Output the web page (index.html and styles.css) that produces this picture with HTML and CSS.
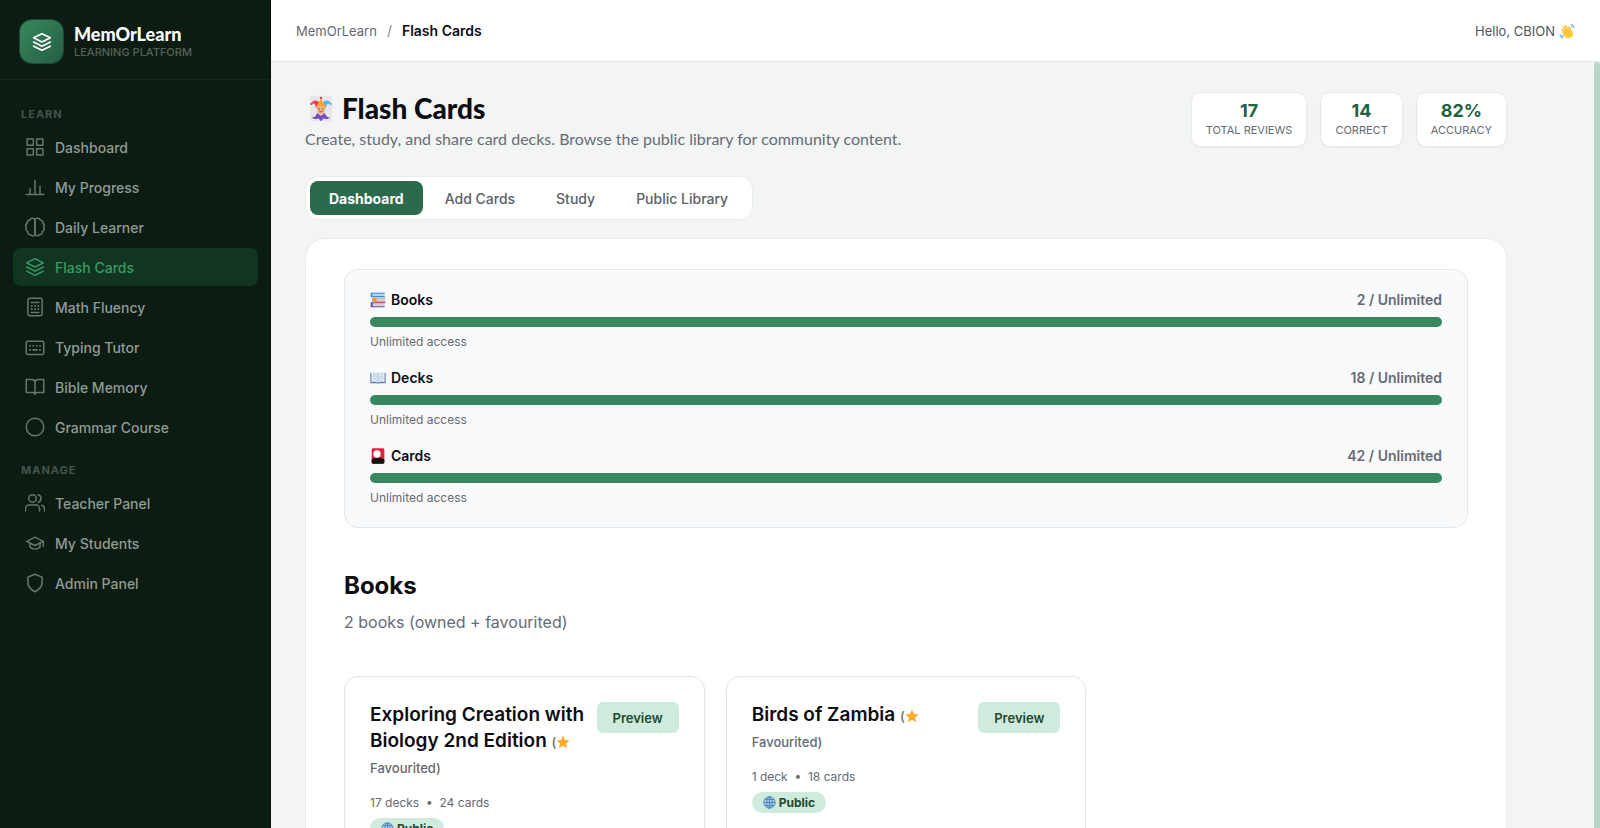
FILE: index.html
```html
<!DOCTYPE html>
<html lang="en">
<head>
<meta charset="utf-8">
<title>Flash Cards - MemOrLearn</title>
<link rel="stylesheet" href="styles.css">
</head>
<body>
<svg class="sprite" aria-hidden="true">
  <symbol id="layers" viewBox="0 0 24 24"><path d="M12 2 2 7l10 5 10-5z"/><path d="m2 12 10 5 10-5"/><path d="m2 17 10 5 10-5"/></symbol>
  <symbol id="star" viewBox="0 0 24 24"><path fill="#fda92b" stroke="none" d="M12 1l3.2 7.6 8.3.7-6.3 5.4 1.9 8.1-7.1-4.3-7.1 4.3 1.9-8.1L.5 9.3l8.3-.7z"/></symbol>
  <symbol id="globe" viewBox="0 0 24 24"><circle cx="12" cy="12" r="10.5" fill="#a9cdea"/><g fill="none" stroke="#4a80b8" stroke-width="1.6"><circle cx="12" cy="12" r="10.5"/><ellipse cx="12" cy="12" rx="5" ry="10.5"/><path d="M12 1.500v21M1.500 12h21M3.500 6.500h17M3.500 17.500h17"/></g></symbol>
</svg>
<div class="app">
  <aside class="sidebar">
    <div class="brand">
      <div class="brand-mark"><svg class="icon"><use href="#layers"/></svg></div>
      <div class="brand-text">
        <div class="brand-name">MemOrLearn</div>
        <div class="brand-tag">LEARNING PLATFORM</div>
      </div>
    </div>
    <nav class="nav">
      <div class="nav-label">LEARN</div>
      <a class="nav-item" href="#"><svg class="icon" viewBox="0 0 24 24"><rect x="2.500" y="2.500" width="7.500" height="7.500"/><rect x="14" y="2.500" width="7.500" height="7.500"/><rect x="2.500" y="14" width="7.500" height="7.500"/><rect x="14" y="14" width="7.500" height="7.500"/></svg>Dashboard</a>
      <a class="nav-item" href="#"><svg class="icon" viewBox="0 0 24 24"><path d="M1.500 21h21M6 20v-6M12 20V4M18 20v-9"/></svg>My Progress</a>
      <a class="nav-item" href="#"><svg class="icon" viewBox="0 0 24 24"><path d="M9.500 1.500A2.500 2.500 0 0 1 12 4v16a2.500 2.500 0 0 1-4.800 1.200A3.300 3.300 0 0 1 3.200 17.500 4 4 0 0 1 1.500 12.500a3.500 3.500 0 0 1 1-5A3.500 3.500 0 0 1 6 3.500a2.800 2.800 0 0 1 3.500-2z"/><path d="M14.500 1.500A2.500 2.500 0 0 0 12 4v16a2.500 2.500 0 0 0 4.800 1.200 3.300 3.300 0 0 0 4-3.700 4 4 0 0 0 1.700-5 3.500 3.500 0 0 0-1-5A3.500 3.500 0 0 0 18 3.500a2.800 2.800 0 0 0-3.500-2z"/></svg>Daily Learner</a>
      <a class="nav-item active" href="#" aria-current="page"><svg class="icon"><use href="#layers"/></svg>Flash Cards</a>
      <a class="nav-item" href="#"><svg class="icon" viewBox="0 0 24 24"><rect x="3.500" y="1.500" width="17" height="21" rx="2"/><path d="M7.500 6.500h9"/><path class="dots" d="M7 11h2M11 11h2M15 11h2M7 14.500h2M11 14.500h2M15 14.500h2"/><path d="M7.500 18.500h9"/></svg>Math Fluency</a>
      <a class="nav-item" href="#"><svg class="icon" viewBox="0 0 24 24"><rect x="1.500" y="5" width="21" height="16" rx="2"/><path class="dots" d="M5 10.500h2M9 10.500h2M13 10.500h2M17 10.500h2M5 15.500h2M9 15.500h6M17 15.500h2"/></svg>Typing Tutor</a>
      <a class="nav-item" href="#"><svg class="icon" viewBox="0 0 24 24"><path d="M1.500 3H8a4 4 0 0 1 4 4v14a3 3 0 0 0-3-2.500H1.500zM22.500 3H16a4 4 0 0 0-4 4v14a3 3 0 0 1 3-2.500h7.500z"/></svg>Bible Memory</a>
      <a class="nav-item" href="#"><svg class="icon" viewBox="0 0 24 24"><circle cx="12" cy="12" r="10.500"/></svg>Grammar Course</a>
      <div class="nav-label">MANAGE</div>
      <a class="nav-item" href="#"><svg class="icon" viewBox="0 0 24 24"><path d="M17.500 21.500v-2.500a4.500 4.500 0 0 0-4.500-4.500H5A4.500 4.500 0 0 0 .5 19v2.500"/><circle cx="9" cy="6.500" r="4.500"/><path d="M23.500 21.500v-2.500a4.500 4.500 0 0 0-3.500-4.300M16 2.200a4.500 4.500 0 0 1 0 8.600"/></svg>Teacher Panel</a>
      <a class="nav-item" href="#"><svg class="icon" viewBox="0 0 24 24"><path d="M22 10 12 5 2 10l10 5z"/><path d="M6 12v5c3.500 3 8.500 3 12 0v-5M22 10v6"/></svg>My Students</a>
      <a class="nav-item" href="#"><svg class="icon" viewBox="0 0 24 24"><path d="M12 22.500s8.500-4 8.500-10.500V5L12 1.500 3.500 5v7c0 6.500 8.500 10.500 8.500 10.500z"/></svg>Admin Panel</a>
    </nav>
  </aside>

  <div class="main">
    <header class="topbar">
      <nav class="crumbs" aria-label="Breadcrumb"><a href="#">MemOrLearn</a><span>/</span><strong>Flash Cards</strong></nav>
      <div class="hello">Hello, CBION
        <svg class="emoji" viewBox="0 0 24 24" role="img" aria-label="Waving hand"><path d="M4 11c-1-2 1-3 2-1.500L9 13 5.500 6.500C5 4.500 7 4 8 5.500L11.500 11 8.500 4.500c0-2 2-2.300 3-.5l3.500 6-1.500-4c0-2 2-2 2.500-.5l4 7c3 6-1 10.500-6 10.500-4 0-6.500-3-7.500-5z" fill="#ffc83d"/><path d="m9 13 2.500 3M11.500 11l2.500 3" stroke="#e69a1d"/><path d="M17 1.500c3 .5 5 2.500 5.500 5.500M18 5c1 .5 1.500 1 2 2M1.500 17c.5 3 2.500 5 5 5.500M4.500 18c.5 1 1 1.500 2 2" fill="none" stroke="#76b5e8" stroke-width="1.800"/></svg>
      </div>
    </header>
    <div class="viewport">
      <main class="content">
        <div class="page-head">
          <div>
            <h1><svg class="joker" viewBox="0 0 24 28" role="img" aria-label="Joker card"><rect width="24" height="28" rx="2" fill="#e5e6ea"/><path d="M12 10C10 6 6 4 2.500 6.500L1 9l3-.5C6 9 6 12 7 14z" fill="#e4444c"/><path d="M12 10c2-4 6-6 9.500-3.500L23 9l-3-.5c-2 .5-2 3.500-3 5.500z" fill="#58b0ee"/><path d="M7 14c0-5 3-6 5-11 2 5 5 6 5 11z" fill="#f9a12f"/><circle cx="12" cy="2.500" r="1.300" fill="#e4444c"/><circle cx="1.500" cy="9" r="1.200" fill="#e4444c"/><circle cx="22.500" cy="9" r="1.200" fill="#58b0ee"/><path d="M8 11h8v5c0 3-2 4.500-4 4.500S8 19 8 16z" fill="#eeb183"/><path d="M10 14v1.500M14 14v1.500" stroke="#513226"/><path d="M10 17.500h4" stroke="#c73c3c"/><path d="M2 23c2 2 4 0 6-4l4 3 4-3c2 4 4 6 6 4-1 3-5 3-7 1.500L12 28l-3-3.500C7 26 3 26 2 23z" fill="#7b4bc4"/></svg>Flash Cards</h1>
            <p class="lead">Create, study, and share card decks. Browse the public library for community content.</p>
          </div>
          <div class="stats">
            <div class="stat"><b>17</b><span>TOTAL REVIEWS</span></div>
            <div class="stat"><b>14</b><span>CORRECT</span></div>
            <div class="stat"><b>82%</b><span>ACCURACY</span></div>
          </div>
        </div>

        <div class="tabs">
          <button class="tab selected" type="button">Dashboard</button>
          <button class="tab" type="button">Add Cards</button>
          <button class="tab" type="button">Study</button>
          <button class="tab" type="button">Public Library</button>
        </div>

        <section class="panel">
          <div class="limits">
            <div class="limit">
              <div class="limit-head"><span class="limit-name"><svg class="emoji" viewBox="0 0 24 24"><path d="M3 1h19v6H3z" fill="#c9cdd5"/><path d="M1 1h21v1.700H3.500V6H22v1.500H1z" fill="#3d8fe0"/><path d="M5 9h18v5H5z" fill="#d5cfca"/><path d="M3 8h20v1.500H6v4h17V15H3z" fill="#b8adb5"/><path d="M4 9h6v5H4z" fill="#fb9a1c"/><path d="M3 17h19v5H3z" fill="#d2d2dc"/><path d="M1 15.500h21V17H4v4.500h18V23H1z" fill="#70479f"/><path d="M10 15h13v1.500H10z" fill="#d94f63"/></svg>Books</span><span class="limit-count">2 / Unlimited</span></div>
              <div class="bar"><div class="fill" style="width:100%"></div></div>
              <div class="note">Unlimited access</div>
            </div>
            <div class="limit">
              <div class="limit-head"><span class="limit-name"><svg class="emoji" viewBox="0 0 24 24"><path d="M.5 4.500h23V20h-10l-1.500 1-1.500-1H.5z" fill="#5c7ca8"/><path d="M2 3.500c4-1 7.500-1 10 .8 2.500-1.800 6-1.800 10-.8v14.800c-4-.8-7.500-.8-10 .7-2.500-1.500-6-1.500-10-.7z" fill="#dce8f2"/><path d="M12 4.500V19" stroke="#9aafc4"/><path d="M4.500 7h5M4.500 10h5M4.500 13h5M14.500 7h5M14.500 10h5M14.500 13h5" stroke="#bccddd"/></svg>Decks</span><span class="limit-count">18 / Unlimited</span></div>
              <div class="bar"><div class="fill" style="width:100%"></div></div>
              <div class="note">Unlimited access</div>
            </div>
            <div class="limit">
              <div class="limit-head"><span class="limit-name"><svg class="emoji" viewBox="0 0 24 24"><rect x="2.500" y=".5" width="19" height="23" rx="2" fill="#e3203e"/><path d="M2.500 17c6-3 13-3 19 0v4.500a2 2 0 0 1-2 2h-15a2 2 0 0 1-2-2z" fill="#16120f"/><circle cx="10.500" cy="9" r="5.500" fill="#fff"/></svg>Cards</span><span class="limit-count">42 / Unlimited</span></div>
              <div class="bar"><div class="fill" style="width:100%"></div></div>
              <div class="note">Unlimited access</div>
            </div>
          </div>

          <h2>Books</h2>
          <p class="count">2 books (owned + favourited)</p>

          <div class="books">
            <article class="book">
              <div class="book-head">
                <h3>Exploring Creation with Biology 2nd Edition <small>(<svg class="emoji"><use href="#star"/></svg> Favourited)</small></h3>
                <button class="preview" type="button">Preview</button>
              </div>
              <div class="meta">17 decks &nbsp;•&nbsp; 24 cards</div>
              <span class="badge"><svg class="emoji"><use href="#globe"/></svg>Public</span>
            </article>
            <article class="book">
              <div class="book-head">
                <h3>Birds of Zambia <small>(<svg class="emoji"><use href="#star"/></svg> Favourited)</small></h3>
                <button class="preview" type="button">Preview</button>
              </div>
              <div class="meta">1 deck &nbsp;•&nbsp; 18 cards</div>
              <span class="badge"><svg class="emoji"><use href="#globe"/></svg>Public</span>
            </article>
          </div>
        </section>
      </main>
      <div class="scroll-thumb"></div>
    </div>
  </div>
</div>
</body>
</html>
```
FILE: styles.css
```css
* { box-sizing: border-box; }
body { margin: 0; font-family: Inter, "Noto Sans", sans-serif; font-size: 14px; color: #0b0d12; background: #f3f5f4; }
h1, h2, h3, p { margin: 0; }
a { color: inherit; text-decoration: none; }
button { font: inherit; border: 0; cursor: pointer; }
.sprite { display: none; }
.icon { width: 20px; height: 20px; fill: none; stroke: currentColor; stroke-width: 1.8; stroke-linecap: round; stroke-linejoin: round; flex: none; }
.emoji { width: 16px; height: 16px; flex: none; }

.app { display: flex; height: 100vh; overflow: hidden; }
.sidebar { width: 271px; flex: none; background: #0c1c13; border-right: 1px solid #06100a; }
.brand { display: flex; align-items: center; gap: 11px; height: 80px; padding: 4px 20px 0; border-bottom: 1px solid #15291d; }
.brand-mark { display: grid; place-items: center; width: 43px; height: 43px; border-radius: 12px; background: linear-gradient(135deg, #38885e, #235f42); box-shadow: 0 0 0 1px #1c4a32; color: #fff; }
.brand-mark .icon { stroke-width: 2; }
.brand-name { font-family: Lato, sans-serif; font-weight: 900; font-size: 18px; line-height: 20px; color: #fff; }
.brand-tag { font-size: 11px; line-height: 16px; font-weight: 500; color: #566159; }
.nav { display: flex; flex-direction: column; gap: 2px; padding: 20px 12px 0 13px; }
.nav-label { font-size: 11px; line-height: 16px; height: 26px; padding: 6px 8px 0; font-weight: 700; letter-spacing: 1px; color: #46534b; }
.nav-item + .nav-label { height: 34px; padding-top: 14px; }
.nav-item { display: flex; align-items: center; gap: 10px; height: 38px; padding: 0 12px; border-radius: 8px; font-weight: 500; color: #919b94; }
.nav-item .icon { color: #69766e; }
.nav-item .dots { stroke-linecap: butt; stroke-width: 2; }
.nav-item.active, .nav-item.active .icon { color: #3a996a; }
.nav-item.active { background: #11351f; }

.main { flex: 1; min-width: 0; display: flex; flex-direction: column; }
.topbar { display: flex; justify-content: space-between; align-items: center; height: 62px; flex: none; padding: 0 25px; background: #fff; border-bottom: 1px solid #e4e8e6; }
.crumbs { display: flex; align-items: baseline; gap: 10px; color: #636870; }
.crumbs a { font-size: 13px; }
.crumbs span { color: #868b91; }
.crumbs strong { font-weight: 600; color: #0b0d12; }
.hello { display: flex; align-items: center; gap: 4px; font-size: 13px; color: #50555e; }
.viewport { flex: 1; min-height: 0; display: flex; overflow: hidden; }
.scroll-thumb { width: 6px; margin-left: auto; flex: none; border-radius: 3px 3px 0 0; background: #b5d8c7; }
.content { flex: 1; max-width: 1236px; padding: 30px 0 0 34px; }
.page-head { display: flex; justify-content: space-between; align-items: flex-start; height: 84px; }
h1 { display: flex; align-items: center; gap: 10px; padding-left: 5px; font-family: Lato, sans-serif; font-weight: 900; font-size: 28px; line-height: 32px; }
.joker { width: 22px; height: 27px; }
.lead { font-family: Lato, sans-serif; font-size: 16px; line-height: 30px; color: #666c76; white-space: nowrap; }
.stats { display: flex; gap: 13px; }
.stat { display: flex; flex-direction: column; align-items: center; padding: 7px 14px 8px; border: 1px solid #e6eae8; border-radius: 10px; background: #fff; box-shadow: 0 1px 2px #0000000a; }
.stat b { font-size: 18px; line-height: 22px; color: #22613f; }
.stat span { font-size: 11px; line-height: 16px; color: #656a73; }
.tabs { display: inline-flex; gap: 3px; padding: 4px 5px 4px 4px; border: 1px solid #e9eeeb; border-radius: 13px; background: #fff; }
.tab { height: 34px; padding: 0 19px; border-radius: 8px; background: none; font-weight: 500; color: #5a5f68; }
.tab.selected { background: #2b6a4c; color: #fff; font-weight: 700; }
.panel { margin-top: 18px; padding: 30px 38px; height: 800px; border: 1px solid #e6eae8; border-radius: 20px; background: #fff; }
.limits { display: flex; flex-direction: column; gap: 16px; padding: 20px 25px 19px; border: 1px solid #e5e8ea; border-radius: 14px; background: #f9fafc; }
.limit-head { display: flex; justify-content: space-between; line-height: 20px; font-weight: 600; }
.limit-name { display: flex; align-items: center; gap: 5px; }
.limit-count { color: #666a74; }
.bar { height: 10px; margin-top: 7px; border-radius: 5px; background: #e5e7eb; overflow: hidden; }
.fill { height: 10px; background: #37885f; }
.note { margin-top: 5px; font-size: 12px; line-height: 20px; color: #656a72; }
h2 { margin-top: 41px; font-size: 24px; line-height: 34px; }
.count { margin-top: 6px; font-size: 16px; line-height: 26px; color: #666b76; }
.books { display: grid; grid-template-columns: repeat(3, 1fr); gap: 21px; margin-top: 41px; }
.book { padding: 25px; height: 260px; border: 1px solid #e4e7e8; border-radius: 14px; background: #fff; box-shadow: 0 1px 3px #0000000a; }
.book-head { display: flex; justify-content: space-between; align-items: flex-start; gap: 8px; }
h3 { font-size: 19px; line-height: 26px; font-weight: 600; }
h3 small { font-size: 13px; line-height: 16px; font-weight: 500; color: #656a73; }
h3 .emoji { width: 14px; height: 14px; vertical-align: -2px; }
.preview { height: 31px; padding: 0 16px; border-radius: 6px; background: #cfebdd; color: #1d4930; font-weight: 600; font-size: 13px; }
.meta { margin-top: 13px; font-size: 12px; line-height: 20px; color: #656a73; }
.badge { display: inline-flex; align-items: center; gap: 3px; margin-top: 5px; padding: 0 11px; height: 21px; border-radius: 11px; background: #cfebdd; font-size: 12px; font-weight: 700; color: #1d4930; }
.badge .emoji { width: 13px; height: 13px; }
```
